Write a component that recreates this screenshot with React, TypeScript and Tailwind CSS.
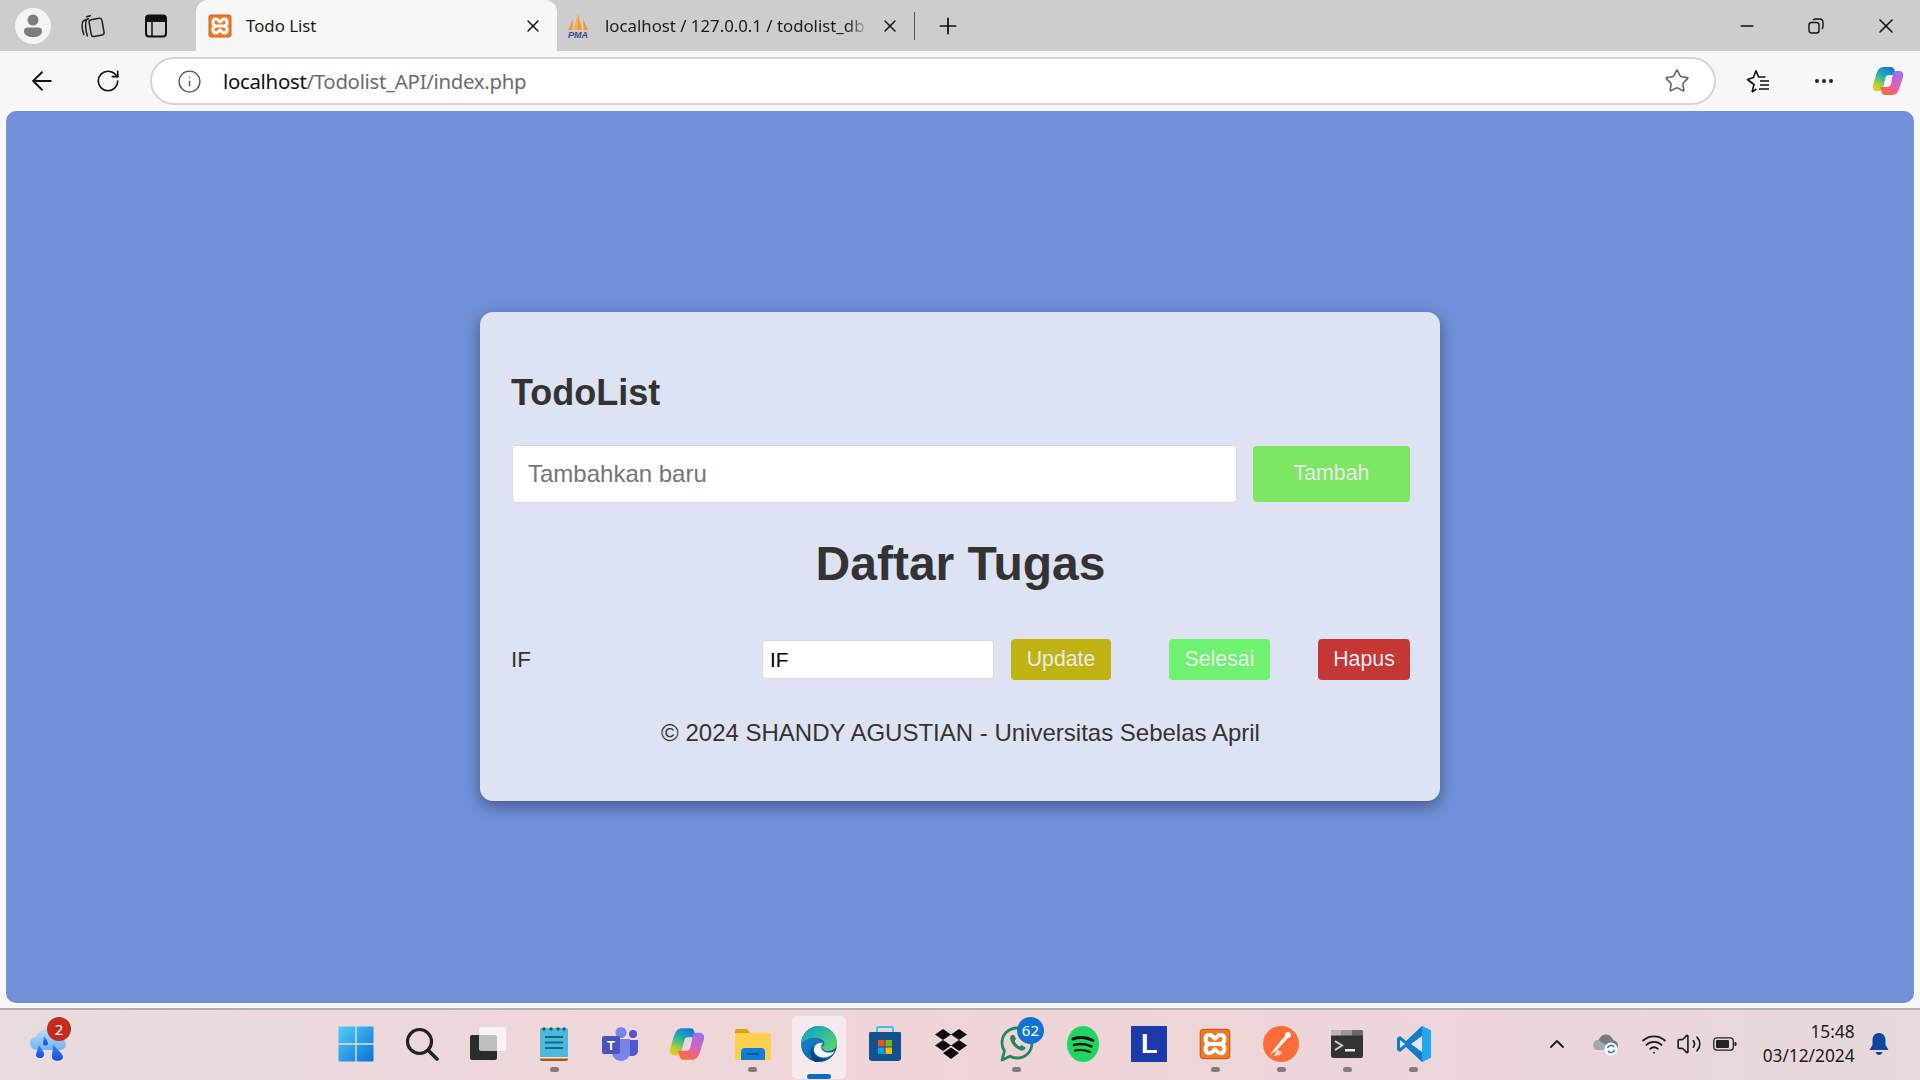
import React from "react";
import { ArrowLeft, RotateCw, Info, Star, X, Plus, Minus, ChevronUp, Wifi, Volume2 } from "lucide-react";

const Xampp = ({ s = 24 }: { s?: number }) => (
  <svg width={s} height={s} viewBox="0 0 24 24">
    <rect x="0.5" y="0.5" width="23" height="23" rx="3" fill="#c8621c" />
    <rect x="1.5" y="1.5" width="21" height="21" rx="2" fill="#ef7a25" />
    <path d="M8 5C4 5 4 11 7.500 12C4 13 4 19 8 19C10 19 11 16.500 12 16C13 16.500 14 19 16 19C20 19 20 13 16.500 12C20 11 20 5 16 5C14 5 13 7.500 12 8C11 7.500 10 5 8 5ZM8.500 12H15.500" fill="none" stroke="#fff" strokeWidth="3" />
  </svg>
);

const Copilot = ({ s = 32 }: { s?: number }) => (
  <svg width={s} height={s} viewBox="0 0 32 32">
    <defs>
      <linearGradient id={`cpa${s}`} x1="0.7" y1="0" x2="0.2" y2="1">
        <stop offset="0" stopColor="#1477e0" />
        <stop offset="0.45" stopColor="#28b8a0" />
        <stop offset="0.8" stopColor="#b8d030" />
        <stop offset="1" stopColor="#f0c020" />
      </linearGradient>
      <linearGradient id={`cpb${s}`} x1="0.7" y1="0" x2="0.3" y2="1">
        <stop offset="0" stopColor="#9a70f0" />
        <stop offset="0.55" stopColor="#e060b0" />
        <stop offset="1" stopColor="#f87030" />
      </linearGradient>
    </defs>
    <path d="M12 2H19C21 2 22 3 22.500 5L24 10H17C15 10 14 11 13.500 13L11 23C10.500 25 9 26 7 26H5C2 26 0 24 1 20L4 10C6 4 8 2 12 2Z" fill={`url(#cpa${s})`} />
    <path d="M13 30H20C24 30 26 28 27.500 23L31 12C32 8 30 6 27 6H25C23 6 21.500 7 21 9L19 19C18.500 21 17 22 15 22H8L9.500 27C10 29 11 30 13 30Z" fill={`url(#cpb${s})`} />
  </svg>
);

const Collections = () => (
  <svg width="26" height="28" viewBox="0 0 26 28" fill="none" stroke="#222" strokeWidth="1.500">
    <path d="M6 5L11 3.500M3 9L9 6.500" />
    <path d="M4 23C2 18 1.500 13 3 9M7.500 24.500C5.500 19 5 13 6.500 7" />
    <rect x="10" y="7" width="13" height="17" rx="2.500" transform="rotate(-10 16 15)" />
  </svg>
);

const TabActions = () => (
  <svg width="22" height="24" viewBox="0 0 22 24" fill="none">
    <rect x="1" y="1.500" width="20" height="21" rx="3" stroke="#111" strokeWidth="2" />
    <path d="M1 3.500A2 2 0 0 1 3 2H19A2 2 0 0 1 21 3.500V8H1Z" fill="#111" />
    <path d="M7 8V22" stroke="#111" strokeWidth="1.500" />
  </svg>
);

const Profile = () => (
  <div className="w-[36px] h-[36px] rounded-full bg-[#f4f4f4] flex items-center justify-center">
    <svg width="20" height="24" viewBox="0 0 20 24" fill="#7d7d7d">
      <circle cx="10" cy="6" r="5.500" />
      <path d="M1 17C1 14.500 2.500 13.500 4.500 13.500H15.500C17.500 13.500 19 14.500 19 17C19 21 15 23 10 23C5 23 1 21 1 17Z" />
    </svg>
  </div>
);

const Pma = () => (
  <svg width="26" height="26" viewBox="0 0 26 26">
    <path d="M3 17L8 6L7.500 17ZM9 17L13 1L17 17ZM18.500 17L18 6L23 17Z" fill="#f29a2e" />
    <path d="M13 1L13 17H9Z" fill="#f6b04e" />
    <text x="13" y="24.500" textAnchor="middle" fontFamily="Liberation Sans" fontSize="9" fontWeight="700" fontStyle="italic" fill="#3d4a86">PMA</text>
  </svg>
);

const FavList = () => (
  <svg width="26" height="26" viewBox="0 0 26 26" fill="none" stroke="#111" strokeWidth="1.600" strokeLinejoin="round">
    <path d="M11 2.500L13.500 9H20L15.500 9M7 24L9 16.500L2.500 11.500L8.500 9.500L11 2.500M7 24L11.500 21" />
    <path d="M15 13H24M15 17H24M14 21H24" />
  </svg>
);

const WinLogo = () => (
  <svg width="36" height="36" viewBox="0 0 36 36">
    <defs>
      <linearGradient id="wl" x1="0" y1="0" x2="1" y2="1">
        <stop offset="0" stopColor="#52cdfb" />
        <stop offset="1" stopColor="#0873d3" />
      </linearGradient>
    </defs>
    <path d="M1.500 0.500H17.300V17.300H0.500V1.500A1 1 0 0 1 1.500 0.500ZM18.700 0.500H34.500A1 1 0 0 1 35.500 1.500V17.300H18.700ZM0.500 18.700H17.300V35.500H1.500A1 1 0 0 1 0.500 34.500ZM18.700 18.700H35.500V34.500A1 1 0 0 1 34.500 35.500H18.700Z" fill="url(#wl)" />
  </svg>
);

const Search = () => (
  <svg width="34" height="34" viewBox="0 0 34 34" fill="none" stroke="#222" strokeWidth="3.200" strokeLinecap="round">
    <circle cx="14.500" cy="14.500" r="12" />
    <path d="M23.500 23.500L32 32" strokeWidth="3.600" />
  </svg>
);

const TaskView = () => (
  <svg width="36" height="36" viewBox="0 0 36 36">
    <rect x="0" y="9" width="27" height="25" rx="2" fill="#2b2b2b" />
    <rect x="9" y="1" width="27" height="24" rx="2" fill="#ffffff" fillOpacity="0.7" />
  </svg>
);

const Notepad = () => (
  <svg width="30" height="36" viewBox="0 0 30 36">
    <path d="M1 30H29V33A2 2 0 0 1 27 35H3A2 2 0 0 1 1 33Z" fill="#b0540f" />
    <rect x="1" y="31" width="28" height="1.500" fill="#f4e6dc" />
    <path d="M3 2H27A2 2 0 0 1 29 4V31H1V4A2 2 0 0 1 3 2Z" fill="#4fb7d9" />
    <path d="M6 11H24M6 16.500H24M6 22H24" stroke="#0d6c8c" strokeWidth="1.800" />
    {[5, 12, 19, 25].map((x) => (<circle key={x} cx={x} cy="3" r="1.700" fill="#0a6080" />))}
  </svg>
);

const Teams = () => (
  <svg width="36" height="34" viewBox="0 0 36 34">
    <circle cx="31" cy="7" r="4" fill="#5059c9" />
    <path d="M24 13H36V24C36 27 33 29 30 29C27 29 24 27 24 24Z" fill="#5059c9" />
    <circle cx="19" cy="5.500" r="5.500" fill="#7b83eb" />
    <path d="M10 12H28V25C28 30 24 34 19 34C14 34 10 30 10 25Z" fill="#7b83eb" />
    <rect x="0" y="9" width="18" height="18" rx="2" fill="#4b53bc" />
    <text x="9" y="23" textAnchor="middle" fontFamily="Liberation Sans" fontWeight="700" fontSize="13" fill="#fff">T</text>
  </svg>
);

const Folder = () => (
  <svg width="36" height="34" viewBox="0 0 36 34">
    <path d="M0 4A2 2 0 0 1 2 2H12L15 6H2V10H0Z" fill="#e0a100" />
    <path d="M0 6H34A2 2 0 0 1 36 8V32A1 1 0 0 1 35 33H1A1 1 0 0 1 0 32Z" fill="#fcd04f" />
    <path d="M6 33V25A4 4 0 0 1 10 21H26A4 4 0 0 1 30 25V33Z" fill="#0f7fd2" />
    <path d="M12 27H24" stroke="#0a4f90" strokeWidth="1.500" />
  </svg>
);

const Edge = () => (
  <svg width="36" height="36" viewBox="0 0 36 36">
    <defs>
      <linearGradient id="eg" x1="0.2" y1="0" x2="1" y2="0.8">
        <stop offset="0" stopColor="#0fa5c9" />
        <stop offset="1" stopColor="#5ad46a" />
      </linearGradient>
      <linearGradient id="eb" x1="0" y1="0" x2="1" y2="1">
        <stop offset="0" stopColor="#1b8fd8" />
        <stop offset="1" stopColor="#0c4f96" />
      </linearGradient>
    </defs>
    <circle cx="18" cy="18" r="18" fill="url(#eb)" />
    <path d="M0.500 17C1 7 9 0 18 0C28 0 36 8 36 17C36 22 32 25 27 25C23 25 21 23 21 21C23 20 24 18 23 16C21 12 15 11 9 12C5 13 2 15 0.500 17Z" fill="url(#eg)" />
    <path d="M22 17C17 16 13 19 13 24C13 28 17 31 22 31.500C27 31.800 32 29 34 25C31 27 26 27 23 25.500C20 24 19 20 22 17Z" fill="#f4f8fb" />
    <path d="M14 36C9 32 8 25 12 20C10 28 16 33 24 33C21 35 17 36.500 14 36Z" fill="#0a3f80" />
  </svg>
);

const Store = () => (
  <svg width="32" height="36" viewBox="0 0 32 36">
    <path d="M8 7V3A2 2 0 0 1 10 1H22A2 2 0 0 1 24 3V7" fill="none" stroke="#33c5ee" strokeWidth="2" />
    <path d="M1 6H31A1 1 0 0 1 32 7V32A3 3 0 0 1 29 35H3A3 3 0 0 1 0 32V7A1 1 0 0 1 1 6Z" fill="#14518f" />
    <rect x="9" y="14" width="6.500" height="6.500" fill="#f25022" />
    <rect x="16.500" y="14" width="6.500" height="6.500" fill="#7fba00" />
    <rect x="9" y="21.500" width="6.500" height="6.500" fill="#00a4ef" />
    <rect x="16.500" y="21.500" width="6.500" height="6.500" fill="#ffb900" />
  </svg>
);

const Dropbox = () => (
  <svg width="32" height="32" viewBox="0 0 32 32" fill="#0a0a0a">
    <path d="M8 1L16 6.500L8 12L0 6.500ZM24 1L32 6.500L24 12L16 6.500ZM8 12L16 17.500L8 23L0 17.500ZM24 12L32 17.500L24 23L16 17.500ZM16 19.500L24 25L16 31L8 25Z" />
  </svg>
);

const WhatsApp = () => (
  <svg width="34" height="36" viewBox="0 0 34 36" fill="none">
    <path d="M2 34L4.500 25C2.800 22.500 2 20 2 17C2 8.500 8.500 2 17 2C25.500 2 32 8.500 32 17C32 25.500 25.500 32 17 32C14.500 32 12 31.300 10 30.200Z" stroke="#20895a" strokeWidth="2.800" strokeLinejoin="round" />
    <path d="M12 9C10 10 9.500 12.500 11 15.500C13 20 17 23.500 21 24.500C23.500 25 25.500 23.500 25.500 21.500L21.500 19L19.500 20.500C17.500 19.500 15.500 17.500 14.500 15L16 13L14 9Z" fill="#20895a" />
  </svg>
);

const Spotify = () => (
  <svg width="32" height="36" viewBox="0 0 32 36" fill="none">
    <ellipse cx="16" cy="18" rx="16" ry="18" fill="#1ed760" />
    <path d="M6 13C12 11 20 11.500 26 14.500" stroke="#111" strokeWidth="3" strokeLinecap="round" />
    <path d="M7 19C12.500 17.500 19 18 24.500 20.500" stroke="#111" strokeWidth="2.500" strokeLinecap="round" />
    <path d="M8 24.500C13 23.500 18 24 23 26" stroke="#111" strokeWidth="2" strokeLinecap="round" />
  </svg>
);

const LApp = () => (
  <div className="w-[36px] h-[36px] bg-[#1c3aa9] flex items-center justify-center font-['Liberation_Sans'] font-bold text-[27px] leading-none text-white">
    L
  </div>
);

const Postman = () => (
  <svg width="36" height="36" viewBox="0 0 36 36">
    <circle cx="18" cy="18" r="18" fill="#ff6c37" />
    <path d="M7 29L14 24L25 12L22 10L12 22Z" fill="#fff" />
    <circle cx="25" cy="9" r="3" fill="#fff" />
    <path d="M14 24L19 26L17 29L11 30Z" fill="#ffe0d2" />
  </svg>
);

const Terminal = () => (
  <svg width="32" height="28" viewBox="0 0 32 28">
    <rect width="32" height="28" rx="2.500" fill="#333" />
    <path d="M2.500 0H10V5.500H0V2.500A2.500 2.500 0 0 1 2.500 0Z" fill="#b8b8b8" />
    <rect x="10" y="0" width="11" height="5.500" fill="#999" />
    <path d="M21 0H29.500A2.500 2.500 0 0 1 32 2.500V5.500H21Z" fill="#6a6a6a" />
    <path d="M4 11L11 15.500L4 20" fill="none" stroke="#cfcfcf" strokeWidth="2" />
    <rect x="14" y="19" width="10" height="2.500" fill="#e8e8e8" />
  </svg>
);

const VSCode = () => (
  <svg width="34" height="36" viewBox="0 0 34 36">
    <path d="M25 0L34 4.500V31.500L25 36L9 21L3 26L0 24V12L3 10L9 15Z" fill="#0f7dcc" />
    <path d="M25 0L34 4.500V31.500L25 36Z" fill="#22a7f0" />
    <path d="M25 10V26L14 18Z" fill="#eef0f2" fillOpacity="0.95" />
    <path d="M3 14L8 18L3 22Z" fill="#eef0f2" fillOpacity="0.95" />
  </svg>
);

const Weather = () => (
  <svg width="36" height="34" viewBox="0 0 36 34">
    <defs>
      <linearGradient id="cld" x1="0" y1="0" x2="0" y2="1">
        <stop offset="0" stopColor="#b8dcfb" />
        <stop offset="1" stopColor="#74b4f2" />
      </linearGradient>
      <linearGradient id="drp" x1="0" y1="0" x2="0" y2="1">
        <stop offset="0" stopColor="#3a86f5" />
        <stop offset="1" stopColor="#0f4fe0" />
      </linearGradient>
    </defs>
    <path d="M8 22C3 22 0 19 0 15C0 11 3 9 6 9C8 4 12 1 17 1C23 1 27 5 28 9C32 9 36 12 36 16C36 20 33 22 29 22Z" fill="url(#cld)" />
    <path d="M14 8C16 11 18 13 18 15.500C18 18 13 18 13 15.500C13 13 14 11 14 8Z" fill="url(#drp)" />
    <path d="M9 17C11 21 15 24 14 27.500C13 31 6 31 6 27C6 24 8 21 9 17Z" fill="url(#drp)" />
    <path d="M23 16C25 20 33 25 33 29C33 34 22 34 22 29C22 25 23 21 23 16Z" fill="url(#drp)" />
  </svg>
);

const Cloud = () => (
  <svg width="26" height="24" viewBox="0 0 26 24">
    <path d="M6 18C2.500 18 0.500 16 0.500 13C0.500 10 3 8 5.500 8C7 4.500 10 2.500 13 2.500C17 2.500 19.500 5.500 20 8C23 8.500 25 10.500 25 13.500C25 16 23.500 18 20 18Z" fill="#7a7a7a" />
    <path d="M6 18C2.500 18 0.500 16 0.500 13C0.500 10 3 8 5.500 8L20 18Z" fill="#a8a8a8" />
    <circle cx="18" cy="17" r="6.500" fill="#fff" />
    <path d="M14.500 16A3.600 3.600 0 0 1 21 15M21.500 18A3.600 3.600 0 0 1 15 19" fill="none" stroke="#1d76d2" strokeWidth="1.500" />
  </svg>
);

const Battery = () => (
  <svg width="24" height="16" viewBox="0 0 24 16" fill="none">
    <rect x="0.800" y="1.800" width="19.500" height="12.400" rx="3" stroke="#222" strokeWidth="1.300" />
    <rect x="3" y="4" width="13" height="8" rx="1" fill="#222" />
    <path d="M21.500 6H22.500A1 1 0 0 1 23.500 7V9A1 1 0 0 1 22.500 10H21.500Z" fill="#222" />
  </svg>
);

const Bell = () => (
  <svg width="20" height="24" viewBox="0 0 20 24" fill="#0a4a9e">
    <path d="M10 1C5.500 1 3.500 4.500 3.500 8V13L0.500 18H19.500L16.500 13V8C16.500 4.500 14.500 1 10 1Z" />
    <path d="M6.500 20H13.500C13 22 11.500 23 10 23C8.500 23 7 22 6.500 20Z" />
  </svg>
);

const apps: { el: React.ReactNode; dot?: boolean; active?: boolean; badge?: string }[] = [
  { el: <WinLogo /> },
  { el: <Search /> },
  { el: <TaskView /> },
  { el: <Notepad />, dot: true },
  { el: <Teams /> },
  { el: <Copilot s={36} /> },
  { el: <Folder />, dot: true },
  { el: <Edge />, active: true },
  { el: <Store /> },
  { el: <Dropbox /> },
  { el: <WhatsApp />, dot: true, badge: "62" },
  { el: <Spotify /> },
  { el: <LApp /> },
  { el: <Xampp s={32} />, dot: true },
  { el: <Postman />, dot: true },
  { el: <Terminal />, dot: true },
  { el: <VSCode />, dot: true },
];

const btn = "rounded-[4px] text-[21.300px] leading-none text-[#e9e9e9] flex items-center justify-center font-['Liberation_Sans']";

export default function App() {
  return (
    <div className="w-full h-screen overflow-hidden flex flex-col bg-[#f7f7f7] font-['Liberation_Sans',sans-serif]">
      {/* title bar */}
      <div className="h-[51px] shrink-0 bg-[#cdcdcd] flex items-center font-['Noto_Sans',sans-serif] text-[#1a1a1a]">
        <div className="w-[66px] flex justify-center"><Profile /></div>
        <div className="w-[54px] flex justify-center"><Collections /></div>
        <div className="w-[72px] flex justify-center"><TabActions /></div>
        <div className="ml-[4px] w-[361px] h-full bg-[#f7f7f7] rounded-t-[12px] flex items-center pl-[12px] pr-[14px]">
          <Xampp s={24} />
          <span className="ml-[14px] text-[16.800px] flex-1 whitespace-nowrap">Todo List</span>
          <X size={20} strokeWidth={1.700} className="text-[#111]" />
        </div>
        <div className="w-[357px] h-full flex items-center pl-[8px] pr-[12px]">
          <Pma />
          <span className="ml-[14px] w-[264px] whitespace-nowrap text-[16.800px] [mask-image:linear-gradient(to_right,black_92%,transparent)]">localhost / 127.0.0.1 / todolist_db</span>
          <X size={20} strokeWidth={1.700} className="ml-[11px] text-[#111]" />
        </div>
        <div className="w-px h-[28px] bg-[#555]" />
        <div className="ml-[20px]"><Plus size={26} strokeWidth={1.600} className="text-[#111]" /></div>
        <div className="flex-1" />
        <div className="flex items-center pr-[22px]">
          <Minus size={20} strokeWidth={1.800} className="text-[#111]" />
          <svg className="ml-[51px]" width="16" height="16" viewBox="0 0 16 16" fill="none" stroke="#111" strokeWidth="1.400">
            <rect x="1" y="4.500" width="10" height="10.500" rx="2.500" />
            <path d="M5 2.200C5.500 1.400 6.500 1 7.500 1H11.500C13.500 1 15 2.500 15 4.500V8.500C15 9.500 14.600 10.500 13.800 11" />
          </svg>
          <X size={24} strokeWidth={1.600} className="ml-[50px] text-[#111]" />
        </div>
      </div>
      {/* toolbar */}
      <div className="h-[60px] shrink-0 flex items-center">
        <div className="w-[84px] flex justify-center"><ArrowLeft size={30} strokeWidth={1.500} className="text-[#111]" /></div>
        <div className="w-[48px] flex justify-center"><RotateCw size={26} strokeWidth={1.500} className="text-[#111]" /></div>
        <div className="ml-[18px] w-[1566px] h-[48px] bg-white border-2 border-[#d5d5d5] rounded-full flex items-center pl-[25px] pr-[24px]">
          <Info size={25} strokeWidth={1.300} className="text-[#555]" />
          <span className="ml-[21px] flex-1 text-[20.400px] font-['Noto_Sans',sans-serif] text-[#111] tracking-[-0.300px]">localhost<span className="text-[#6b6b6b]">/Todolist_API/index.php</span></span>
          <Star size={26} strokeWidth={1.500} className="text-[#666]" />
        </div>
        <div className="ml-[28px] w-[28px] flex justify-center"><FavList /></div>
        <div className="ml-[38px] w-[28px] flex justify-center gap-[3.500px]">
          <i className="w-[3.500px] h-[3.500px] rounded-full bg-[#222]" />
          <i className="w-[3.500px] h-[3.500px] rounded-full bg-[#222]" />
          <i className="w-[3.500px] h-[3.500px] rounded-full bg-[#222]" />
        </div>
        <div className="ml-[34px]"><Copilot s={32} /></div>
      </div>
      {/* page */}
      <div className="flex-1 mx-[6px] mb-[5px] pb-px rounded-[10px] bg-[#7090d9] flex items-center justify-center">
        <div className="w-[960px] rounded-[13px] bg-[#dee3f3] shadow-[0_5px_16px_rgba(0,0,0,0.4)] pt-[62px] pb-[54px] pl-[31px] pr-[30px] text-[#333333]">
          <h1 className="text-[36px] leading-[37px] font-bold">TodoList</h1>
          <div className="mt-[34px] flex items-center">
            <input
              readOnly
              placeholder="Tambahkan baru"
              className="ml-px w-[725px] h-[58px] bg-white border border-[#d8d8d8] rounded-[4px] px-[15px] text-[24px] placeholder:text-[#757575] outline-none"
            />
            <button className={`ml-[16px] w-[157px] h-[56px] bg-[#7de663] ${btn}`}>Tambah</button>
          </div>
          <h2 className="mt-[33px] text-center text-[48px] leading-[55px] font-bold">Daftar Tugas</h2>
          <div className="mt-[48px] flex items-center h-[41px]">
            <span className="w-[252px] text-[22.400px] -ml-px pl-px">IF</span>
            <input
              readOnly
              value="IF"
              className="w-[232px] h-[39px] bg-white border border-[#d8d8d8] rounded-[4px] px-[7px] text-[20.800px] text-black outline-none"
            />
            <button className={`ml-[17px] w-[100px] h-[41px] bg-[#bfb414] ${btn}`}>Update</button>
            <button className={`ml-[58px] w-[101px] h-[41px] bg-[#6ff270] ${btn}`}>Selesai</button>
            <button className={`ml-[48px] w-[92px] h-[41px] bg-[#c53636] ${btn}`}>Hapus</button>
          </div>
          <p className="mt-[39px] text-center text-[24px] leading-[28px]">© 2024 SHANDY AGUSTIAN - Universitas Sebelas April</p>
        </div>
      </div>
      {/* taskbar */}
      <div className="h-[72px] shrink-0 border-t-2 border-[#b5afaf] bg-gradient-to-r from-[#e8dcdd] via-[#f0d4d7] to-[#e6d8dc] flex items-center">
        <div className="w-[323px] h-full pl-[30px] flex items-center">
          <div className="relative">
            <Weather />
            <div className="absolute -top-[11px] left-[17px] w-[24px] h-[24px] rounded-full bg-[#c42b1c] text-white text-[15px] flex items-center justify-center font-['Noto_Sans',sans-serif]">2</div>
          </div>
        </div>
        <div className="flex h-full">
          {apps.map((a, i) => (
            <div key={i} className="relative w-[66.100px] h-full pb-[2px] flex items-center justify-center">
              {a.active && <div className="absolute left-[6px] right-[6px] top-[6px] bottom-[1px] rounded-[5px] bg-white/50" />}
              <div className="relative flex items-center justify-center">{a.el}</div>
              {a.dot && <div className="absolute bottom-[8px] left-1/2 -ml-[4.500px] w-[9px] h-[5px] rounded-full bg-[#857a7c]" />}
              {a.active && <div className="absolute bottom-[1px] left-1/2 -ml-[12px] w-[24px] h-[5px] rounded-full bg-[#0a6cc4]" />}
              {a.badge && <div className="absolute top-[7px] left-[33px] w-[27px] h-[27px] rounded-full bg-[#0f74d1] text-white text-[15px] flex items-center justify-center font-['Noto_Sans',sans-serif]">{a.badge}</div>}
            </div>
          ))}
        </div>
        <div className="flex-1 h-full pb-[2px] flex items-center text-[#1c1c1c] font-['Noto_Sans',sans-serif]">
          <div className="ml-[98px] w-[24px] flex justify-center"><ChevronUp size={24} strokeWidth={1.800} /></div>
          <div className="ml-[24px] w-[26px]"><Cloud /></div>
          <div className="ml-[22px]"><Wifi size={26} strokeWidth={1.700} /></div>
          <div className="ml-[9px]"><Volume2 size={26} strokeWidth={1.500} /></div>
          <div className="ml-[11px]"><Battery /></div>
          <div className="ml-[25px] w-[93px] text-right text-[17.300px] leading-[24px] whitespace-nowrap">
            <div>15:48</div>
            <div>03/12/2024</div>
          </div>
          <div className="ml-[14px]"><Bell /></div>
        </div>
      </div>
    </div>
  );
}
